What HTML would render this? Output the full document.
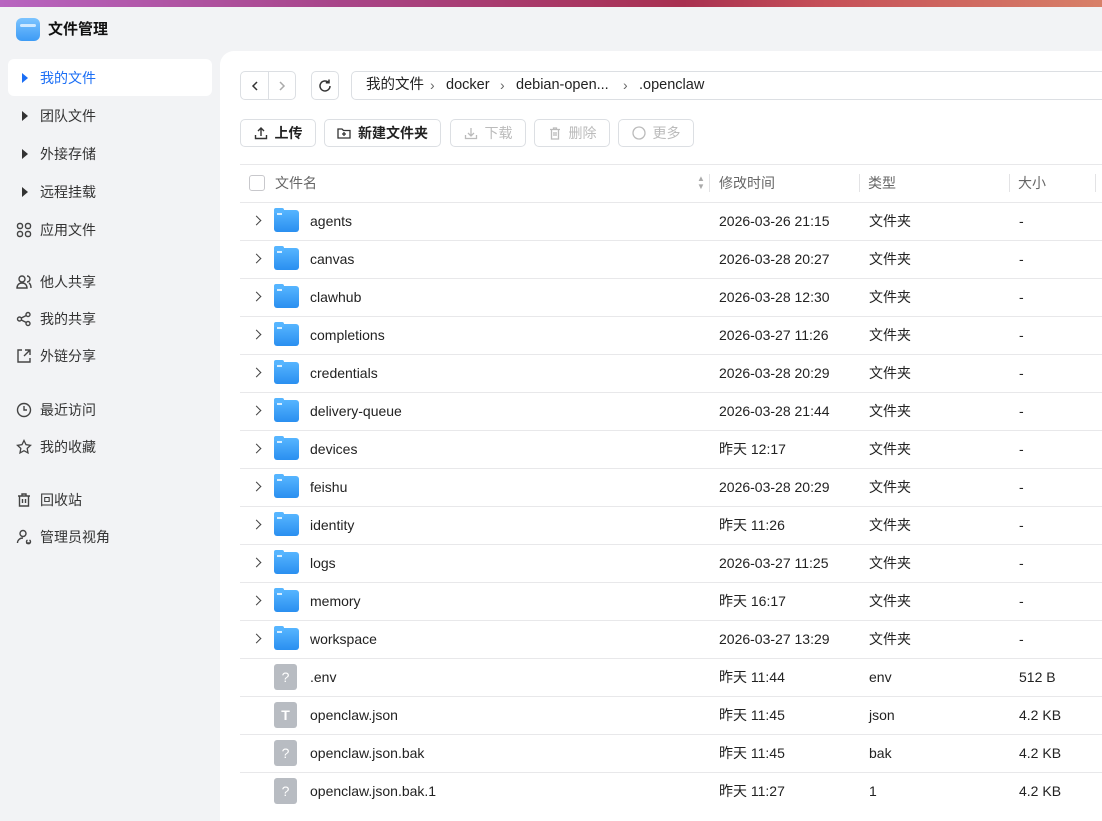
<!DOCTYPE html>
<html><head><meta charset="utf-8"><style>
*{box-sizing:border-box;margin:0;padding:0}
body{width:1102px;height:808px;overflow:hidden;background:#f2f3f5;font-family:"Liberation Sans","Noto Sans CJK SC",sans-serif;font-size:14px;line-height:20px;color:#222;position:relative}
.top{position:absolute;left:0;top:0;width:1102px;height:7px;background:linear-gradient(90deg,#b865c0 0%,#a8458a 30%,#a83050 62%,#c65058 75%,#d88068 100%)}
.win{position:absolute;left:0;top:7px;width:1102px;height:801px;background:#f2f3f5;border-top-left-radius:14px}
.abs{position:absolute}
.logo{left:16px;top:11px;width:24px;height:23px;border-radius:6px;background:linear-gradient(#7cc4ff,#3d9bf5)}
.logo:after{content:"";position:absolute;left:4px;top:6px;width:16px;height:3px;background:#cfe9ff;border-radius:2px}
.title{left:48px;top:13px;font-size:15px;font-weight:bold;color:#111}
.nav{left:8px;width:204px;height:37px;border-radius:6px;display:flex;align-items:center;padding-left:8px;color:#333}
.nav.act{background:#fff;color:#1a6ef5}
.nav .ic{width:16px;display:inline-flex;justify-content:center;margin-right:8px}
.tri{width:0;height:0;border-left:6px solid #333;border-top:5px solid transparent;border-bottom:5px solid transparent;margin-left:2px}
.panel{position:absolute;left:220px;top:44px;width:900px;height:770px;background:#fff;border-top-left-radius:14px}
.box{position:absolute;border:1px solid #dcdfe3;border-radius:5px;background:#fff}
.btn{position:absolute;top:119px;height:28px;border:1px solid #dcdfe3;border-radius:5px;display:flex;align-items:center;justify-content:center;gap:7px;font-size:14px;font-weight:bold;color:#222}
.btn.dis{color:#bbb;font-weight:normal}
.hl{position:absolute;left:240px;width:870px;height:1px;background:#e8e8ea}
.row{position:absolute;left:240px;width:870px;height:38px}
.row span{position:absolute;top:9px;line-height:20px;height:20px}
.fold{position:absolute;left:34px;top:8px;width:25px;height:22px;border-radius:3px;background:linear-gradient(#56b5ff,#2a8ff0)}
.fold:before{content:"";position:absolute;left:0;top:-2px;width:10px;height:5px;background:#56b5ff;border-radius:2px 2px 0 0}
.fold:after{content:"";position:absolute;left:3px;top:3px;width:5px;height:2px;background:#d8eeff}
.file{position:absolute;left:34px;top:6px;width:23px;height:26px;border-radius:3px;background:#b8bcc2;color:#fff;font-size:14px;text-align:center;line-height:26px;font-style:normal}
.chev{position:absolute;left:13px;top:15px;width:7px;height:7px;border-right:1.5px solid #444;border-top:1.5px solid #444;transform:rotate(45deg)}
.hd{position:absolute;top:173px;color:#666}
.sep{position:absolute;top:174px;width:1px;height:18px;background:#e3e3e5}
.bc{position:absolute;top:75px;font-size:14.5px;line-height:20px}
.bs{position:absolute;top:75px;color:#666;line-height:20px}
</style></head><body>
<div class="top"></div>
<div class="win">
<div class="abs logo"></div>
<div class="abs title">文件管理</div>
<div class="abs nav act" style="top:52px"><span class="ic"><span class="tri" style="border-left-color:#1a6ef5"></span></span>我的文件</div>
<div class="abs nav" style="top:90px"><span class="ic"><span class="tri"></span></span>团队文件</div>
<div class="abs nav" style="top:128px"><span class="ic"><span class="tri"></span></span>外接存储</div>
<div class="abs nav" style="top:166px"><span class="ic"><span class="tri"></span></span>远程挂载</div>
<div class="abs nav" style="top:204px"><span class="ic"><svg width="16" height="16" fill="none" stroke="#444" stroke-width="1.4"><rect x="1.5" y="1.5" width="5" height="5" rx="2"/><rect x="9.5" y="1.5" width="5" height="5" rx="2"/><rect x="1.5" y="9.5" width="5" height="5" rx="2"/><rect x="9.5" y="9.5" width="5" height="5" rx="2"/></svg></span>应用文件</div>
<div class="abs nav" style="top:256px"><span class="ic"><svg width="16" height="16" fill="none" stroke="#444" stroke-width="1.4"><circle cx="6" cy="5" r="3"/><path d="M1 14c0-3 2-5 5-5s5 2 5 5zM11 2a3 3 0 010 6M13 9c1.5 1 2 3 2 5"/></svg></span>他人共享</div>
<div class="abs nav" style="top:293px"><span class="ic"><svg width="16" height="16" fill="none" stroke="#444" stroke-width="1.4"><circle cx="12" cy="3.5" r="2"/><circle cx="3.5" cy="8" r="2"/><circle cx="12" cy="12.5" r="2"/><path d="M5.3 7l5-2.5M5.3 9l5 2.5"/></svg></span>我的共享</div>
<div class="abs nav" style="top:330px"><span class="ic"><svg width="16" height="16" fill="none" stroke="#444" stroke-width="1.4"><path d="M6 2H2v12h12v-4M9 2h5v5M14 2L8 8"/></svg></span>外链分享</div>
<div class="abs nav" style="top:384px"><span class="ic"><svg width="16" height="16" fill="none" stroke="#444" stroke-width="1.4"><circle cx="8" cy="8" r="6.5"/><path d="M8 4v4h3"/></svg></span>最近访问</div>
<div class="abs nav" style="top:421px"><span class="ic"><svg width="16" height="16" fill="none" stroke="#444" stroke-width="1.3"><path d="M8 1.5l2 4.2 4.5.6-3.3 3.1.8 4.5L8 11.7l-4 2.2.8-4.5L1.5 6.3 6 5.7z"/></svg></span>我的收藏</div>
<div class="abs nav" style="top:474px"><span class="ic"><svg width="16" height="16" fill="none" stroke="#444" stroke-width="1.4"><path d="M2 4h12M6 4V2h4v2M3.5 4v10h9V4M6.5 7v4M9.5 7v4"/></svg></span>回收站</div>
<div class="abs nav" style="top:511px"><span class="ic"><svg width="16" height="16" fill="none" stroke="#444" stroke-width="1.4"><circle cx="7" cy="4.5" r="3"/><path d="M1.5 14c0-3 2.5-5 5.5-5M10 14h4M11.5 11a2 2 0 102 0"/></svg></span>管理员视角</div>
<div class="panel"></div>
</div>
<div class="box" style="left:240px;top:71px;width:56px;height:29px"><div class="abs" style="left:27px;top:0;width:1px;height:27px;background:#dcdfe3"></div>
<svg class="abs" style="left:9px;top:8px" width="10" height="12" fill="none" stroke="#333" stroke-width="1.5"><path d="M7 2L3 6l4 4"/></svg>
<svg class="abs" style="left:36px;top:8px" width="10" height="12" fill="none" stroke="#aaa" stroke-width="1.5"><path d="M3 2l4 4-4 4"/></svg></div>
<div class="box" style="left:311px;top:71px;width:28px;height:29px"><svg class="abs" style="left:5px;top:6px" width="16" height="16" fill="none" stroke="#333" stroke-width="1.5"><path d="M13 8a5 5 0 11-1.5-3.6M12 1.5v3.2H8.8"/></svg></div>
<div class="box" style="left:351px;top:71px;width:800px;height:29px"></div>
<div class="bc" style="left:366px">我的文件</div><div class="bs" style="left:430px">›</div>
<div class="bc" style="left:446px">docker</div><div class="bs" style="left:500px">›</div>
<div class="bc" style="left:516px">debian-open...</div><div class="bs" style="left:623px">›</div>
<div class="bc" style="left:639px">.openclaw</div>

<div class="btn" style="left:240px;width:76px"><svg width="14" height="14" fill="none" stroke="#333" stroke-width="1.4"><path d="M7 10V2M4 5l3-3 3 3M1.5 9v3.5h11V9"/></svg>上传</div>
<div class="btn" style="left:324px;width:117px"><svg width="14" height="14" fill="none" stroke="#333" stroke-width="1.3"><path d="M1 3h4l1.5 1.5H13V12H1zM7 6v4M5 8h4"/></svg>新建文件夹</div>
<div class="btn dis" style="left:450px;width:76px"><svg width="14" height="14" fill="none" stroke="#bbb" stroke-width="1.3"><path d="M7 2v8M4 7l3 3 3-3M1.5 9v3.5h11V9"/></svg>下载</div>
<div class="btn dis" style="left:534px;width:76px"><svg width="14" height="14" fill="none" stroke="#bbb" stroke-width="1.3"><path d="M2 3.5h10M5.5 3.5V2h3v1.5M3.5 3.5V13h7V3.5M6 6v4M8 6v4"/></svg>删除</div>
<div class="btn dis" style="left:618px;width:76px"><svg width="14" height="14" fill="none" stroke="#bbb" stroke-width="1.3"><circle cx="7" cy="7" r="6"/></svg>更多</div>

<div class="hl" style="top:164px"></div>
<div class="abs" style="left:249px;top:175px;width:16px;height:16px;border:1px solid #c8c8cc;border-radius:3px"></div>
<div class="hd" style="left:275px">文件名</div>
<div class="abs" style="left:697px;top:175px;font-size:8px;color:#aaa;line-height:8px">▲<br>▼</div>
<div class="sep" style="left:709px"></div><div class="hd" style="left:719px">修改时间</div>
<div class="sep" style="left:859px"></div><div class="hd" style="left:868px">类型</div>
<div class="sep" style="left:1009px"></div><div class="hd" style="left:1018px">大小</div>
<div class="sep" style="left:1095px"></div>
<div class="hl" style="top:202px"></div>

<div class="row" style="top:202px"><i class="chev"></i><i class="fold"></i><span style="left:70px">agents</span><span style="left:479px">2026-03-26 21:15</span><span style="left:629px">文件夹</span><span style="left:779px">-</span></div><div class="hl" style="top:240px"></div>
<div class="row" style="top:240px"><i class="chev"></i><i class="fold"></i><span style="left:70px">canvas</span><span style="left:479px">2026-03-28 20:27</span><span style="left:629px">文件夹</span><span style="left:779px">-</span></div><div class="hl" style="top:278px"></div>
<div class="row" style="top:278px"><i class="chev"></i><i class="fold"></i><span style="left:70px">clawhub</span><span style="left:479px">2026-03-28 12:30</span><span style="left:629px">文件夹</span><span style="left:779px">-</span></div><div class="hl" style="top:316px"></div>
<div class="row" style="top:316px"><i class="chev"></i><i class="fold"></i><span style="left:70px">completions</span><span style="left:479px">2026-03-27 11:26</span><span style="left:629px">文件夹</span><span style="left:779px">-</span></div><div class="hl" style="top:354px"></div>
<div class="row" style="top:354px"><i class="chev"></i><i class="fold"></i><span style="left:70px">credentials</span><span style="left:479px">2026-03-28 20:29</span><span style="left:629px">文件夹</span><span style="left:779px">-</span></div><div class="hl" style="top:392px"></div>
<div class="row" style="top:392px"><i class="chev"></i><i class="fold"></i><span style="left:70px">delivery-queue</span><span style="left:479px">2026-03-28 21:44</span><span style="left:629px">文件夹</span><span style="left:779px">-</span></div><div class="hl" style="top:430px"></div>
<div class="row" style="top:430px"><i class="chev"></i><i class="fold"></i><span style="left:70px">devices</span><span style="left:479px">昨天 12:17</span><span style="left:629px">文件夹</span><span style="left:779px">-</span></div><div class="hl" style="top:468px"></div>
<div class="row" style="top:468px"><i class="chev"></i><i class="fold"></i><span style="left:70px">feishu</span><span style="left:479px">2026-03-28 20:29</span><span style="left:629px">文件夹</span><span style="left:779px">-</span></div><div class="hl" style="top:506px"></div>
<div class="row" style="top:506px"><i class="chev"></i><i class="fold"></i><span style="left:70px">identity</span><span style="left:479px">昨天 11:26</span><span style="left:629px">文件夹</span><span style="left:779px">-</span></div><div class="hl" style="top:544px"></div>
<div class="row" style="top:544px"><i class="chev"></i><i class="fold"></i><span style="left:70px">logs</span><span style="left:479px">2026-03-27 11:25</span><span style="left:629px">文件夹</span><span style="left:779px">-</span></div><div class="hl" style="top:582px"></div>
<div class="row" style="top:582px"><i class="chev"></i><i class="fold"></i><span style="left:70px">memory</span><span style="left:479px">昨天 16:17</span><span style="left:629px">文件夹</span><span style="left:779px">-</span></div><div class="hl" style="top:620px"></div>
<div class="row" style="top:620px"><i class="chev"></i><i class="fold"></i><span style="left:70px">workspace</span><span style="left:479px">2026-03-27 13:29</span><span style="left:629px">文件夹</span><span style="left:779px">-</span></div><div class="hl" style="top:658px"></div>
<div class="row" style="top:658px"><i class="file">?</i><span style="left:70px">.env</span><span style="left:479px">昨天 11:44</span><span style="left:629px">env</span><span style="left:779px">512 B</span></div><div class="hl" style="top:696px"></div>
<div class="row" style="top:696px"><i class="file" style="font-weight:bold">T</i><span style="left:70px">openclaw.json</span><span style="left:479px">昨天 11:45</span><span style="left:629px">json</span><span style="left:779px">4.2 KB</span></div><div class="hl" style="top:734px"></div>
<div class="row" style="top:734px"><i class="file">?</i><span style="left:70px">openclaw.json.bak</span><span style="left:479px">昨天 11:45</span><span style="left:629px">bak</span><span style="left:779px">4.2 KB</span></div><div class="hl" style="top:772px"></div>
<div class="row" style="top:772px"><i class="file">?</i><span style="left:70px">openclaw.json.bak.1</span><span style="left:479px">昨天 11:27</span><span style="left:629px">1</span><span style="left:779px">4.2 KB</span></div>
</body></html>
